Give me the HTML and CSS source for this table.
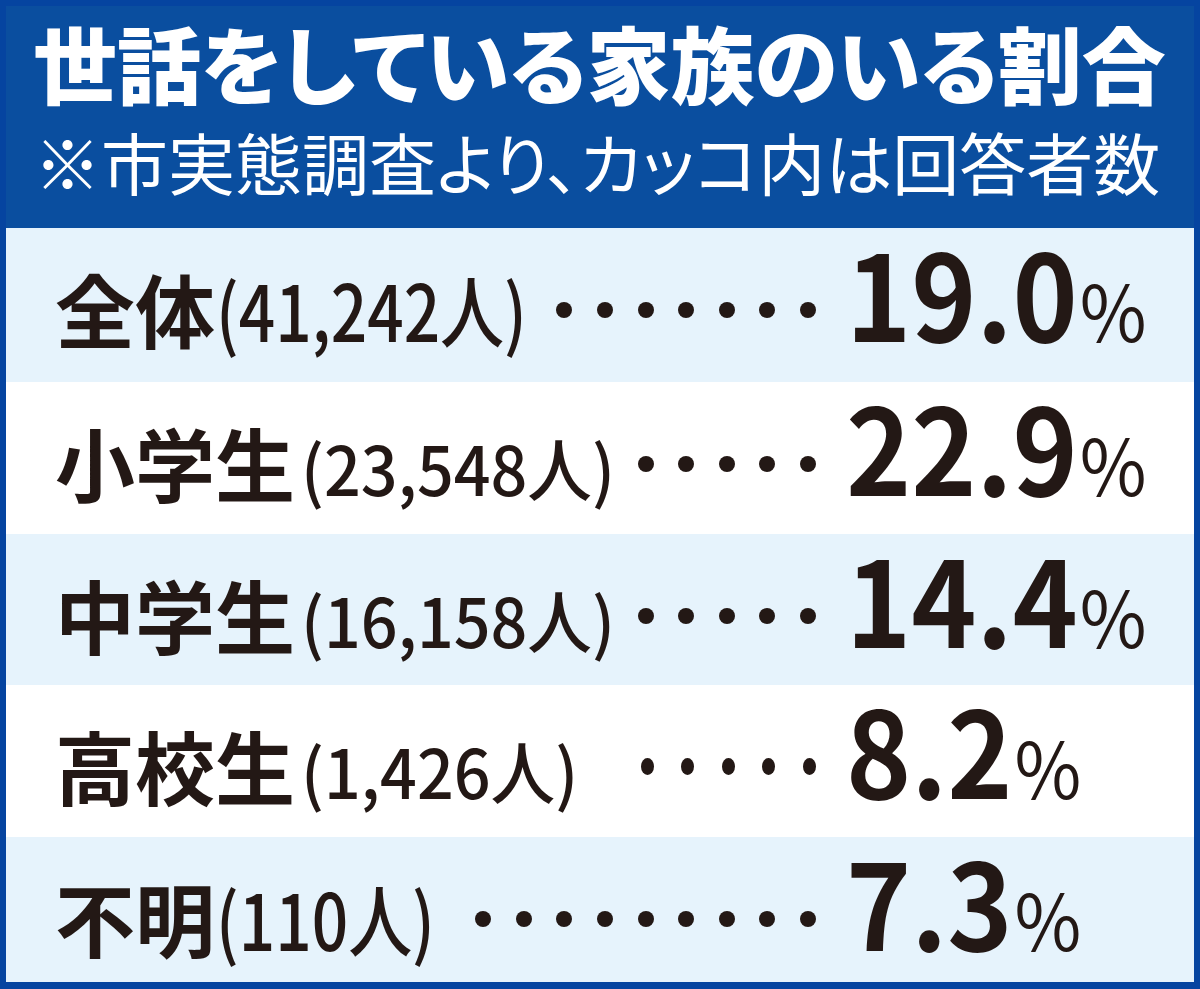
FILE: index.html
```html
<!DOCTYPE html>
<html lang="ja">
<head>
<meta charset="utf-8">
<title>世話をしている家族のいる割合</title>
<link rel="stylesheet" href="styles.css">
</head>
<body>
<div class="card">
  <header class="head">
    <h1 class="title">世話をしている家族のいる割合</h1>
    <p class="sub">※市実態調査より、カッコ内は回答者数</p>
  </header>
  <div class="rows">
    <div class="row tint">
      <div class="lead"><span class="label">全体</span><span class="count big">(41,242人)</span></div>
      <div class="dots"><i></i><i></i><i></i><i></i><i></i><i></i><i></i></div>
      <div class="val"><span class="val-in"><span class="num">19.0</span><span class="pct">%</span></span></div>
    </div>
    <div class="row">
      <div class="lead"><span class="label">小学生</span><span class="count">(23,548人)</span></div>
      <div class="dots"><i></i><i></i><i></i><i></i><i></i></div>
      <div class="val"><span class="val-in"><span class="num">22.9</span><span class="pct">%</span></span></div>
    </div>
    <div class="row tint">
      <div class="lead"><span class="label">中学生</span><span class="count">(16,158人)</span></div>
      <div class="dots"><i></i><i></i><i></i><i></i><i></i></div>
      <div class="val"><span class="val-in"><span class="num">14.4</span><span class="pct">%</span></span></div>
    </div>
    <div class="row">
      <div class="lead"><span class="label">高校生</span><span class="count">(1,426人)</span></div>
      <div class="dots oval"><i></i><i></i><i></i><i></i><i></i></div>
      <div class="val"><span class="val-in"><span class="num">8.2</span><span class="pct">%</span></span></div>
    </div>
    <div class="row tint">
      <div class="lead"><span class="label">不明</span><span class="count big">(110人)</span></div>
      <div class="dots"><i></i><i></i><i></i><i></i><i></i><i></i><i></i><i></i><i></i></div>
      <div class="val"><span class="val-in"><span class="num">7.3</span><span class="pct">%</span></span></div>
    </div>
  </div>
</div>
</body>
</html>
```
FILE: styles.css
```css
html, body {
  margin: 0;
  padding: 0;
  background: #ffffff;
}

body {
  font-family: "Noto Sans CJK JP", "Noto Sans", sans-serif;
  color: #231815;
}

.card {
  width: 1200px;
  height: 989px;
  box-sizing: border-box;
  border: 6px solid #0544a0;
  border-bottom-width: 7px;
  display: flex;
  flex-direction: column;
  background: #ffffff;
}

.head {
  height: 222px;
  box-sizing: border-box;
  background: #0a4e9f;
  color: #ffffff;
  padding: 14px 0 0 27px;
}

.title {
  margin: 0;
  font-size: 84px;
  font-weight: 900;
  line-height: 1;
  font-feature-settings: "palt";
  white-space: nowrap;
}

.sub {
  margin: 23px 0 0 1px;
  font-size: 67px;
  font-weight: 400;
  line-height: 1;
  font-feature-settings: "palt";
  white-space: nowrap;
}

.rows {
  display: grid;
  grid-template-columns: minmax(0, 1fr);
  grid-template-rows: 154px 152px 151px 152px 145px;
}

.row {
  display: flex;
  align-items: baseline;
  padding: 3px 0 0 49px;
  box-sizing: border-box;
  min-width: 0;
  background: #ffffff;
}

.row.tint {
  background: #e6f3fc;
}

.lead {
  flex: 1 1 0;
  min-width: 0;
  white-space: nowrap;
  line-height: 1;
}

.label {
  font-size: 80px;
  font-weight: 700;
}

.count {
  display: inline-block;
  font-size: 68px;
  font-weight: 500;
  margin-left: 6px;
  transform: scaleX(0.95);
  transform-origin: left center;
}

.count.big {
  font-size: 78px;
  margin-left: 1px;
  transform: scaleX(0.82);
}

.dots {
  flex: none;
  font-size: 0;
  line-height: 1;
  white-space: nowrap;
  margin-right: 30px;
}

.dots i {
  display: inline-block;
  width: 16px;
  height: 16px;
  border-radius: 50%;
  background: #231815;
  margin: 0 0 24px 24.6px;
}

.dots.oval i {
  width: 13px;
  height: 17px;
  margin-left: 27.6px;
  margin-bottom: 24px;
}

.val {
  flex: none;
  width: 348px;
  white-space: nowrap;
  line-height: 1;
}

.val-in {
  display: inline-block;
  transform: scaleX(0.93);
  transform-origin: left center;
}

.num {
  font-size: 119px;
  font-weight: 700;
}

.pct {
  font-size: 78px;
  font-weight: 400;
  margin-left: 2px;
}
```
